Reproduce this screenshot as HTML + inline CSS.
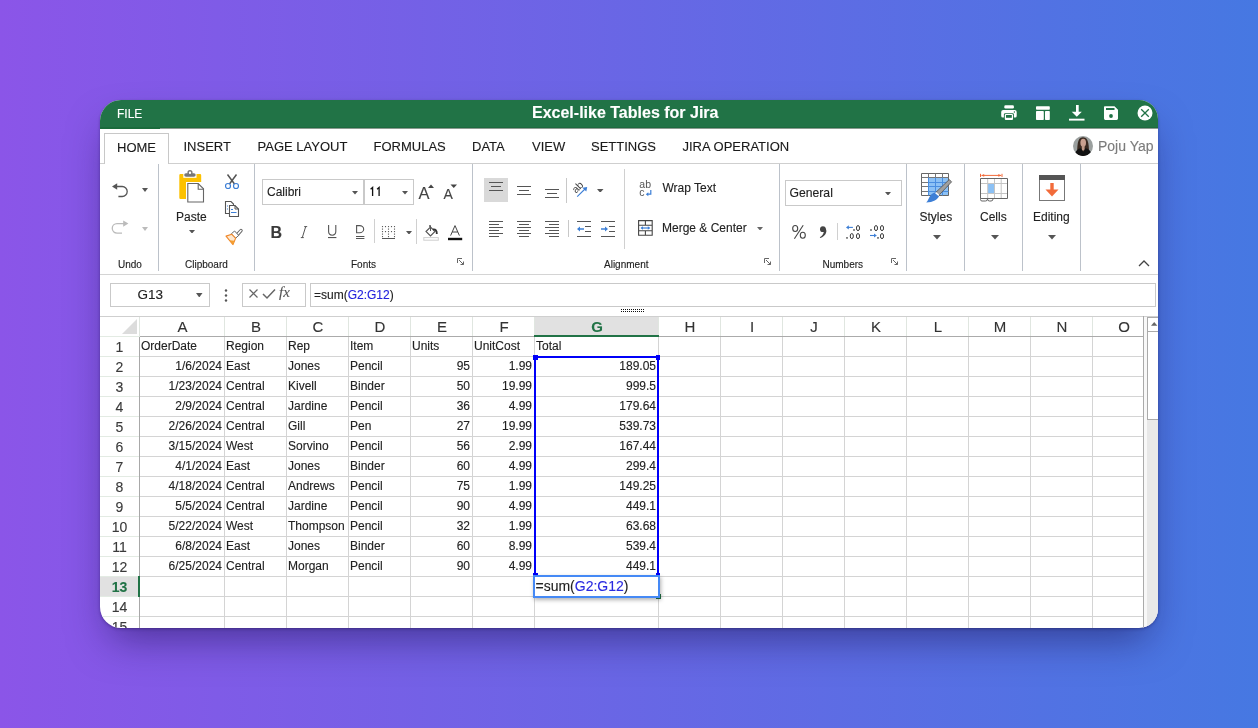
<!DOCTYPE html><html><head><meta charset='utf-8'><style>
*{box-sizing:border-box;margin:0;padding:0}
html,body{width:1258px;height:728px;overflow:hidden}
body{background:linear-gradient(90deg,#8b55e8 0%,#4678e2 100%);font-family:"Liberation Sans",sans-serif;position:relative}
#win{position:absolute;left:100px;top:100px;width:1058px;height:528px;border-radius:21px 19px 19px 21px;overflow:hidden;background:#fff;box-shadow:0 1px 3px rgba(20,10,60,.35),0 20px 40px -10px rgba(20,10,70,.5);will-change:transform}
.a{position:absolute;display:block}
.t{position:absolute;white-space:pre;line-height:1;-webkit-text-stroke:0.12px currentColor}
</style></head><body><div id='win'><div class="a" style="left:0px;top:0px;width:1058px;height:28px;background:#217346"></div>
<div class="a" style="left:0px;top:27px;width:1058px;height:1px;background:#1d6a3f"></div>
<div class="a" style="left:0px;top:28px;width:1058px;height:1px;background:#8a9a90"></div>
<div class="a" style="left:0px;top:27px;width:60px;height:2px;background:#1a6b3c"></div>
<div class="t" style="left:17px;top:8px;font-size:12px;color:#fff;">FILE</div>
<div class="t" style="left:432px;top:5px;font-size:16px;color:#fff;font-weight:bold">Excel-like Tables for Jira</div>
<svg class="a" style="left:900px;top:4px" width="18" height="18" viewBox="0 0 18 18"><rect x="4.3" y="1.2" width="9.6" height="3.3" rx="1.2" fill="#fff"/><path d="M3.2 6h11.5a2 2 0 0 1 2 2v4a1.6 1.6 0 0 1-1.6 1.6H2.8A1.6 1.6 0 0 1 1.2 12V8a2 2 0 0 1 2-2z" fill="#fff"/><rect x="3.9" y="9.3" width="10" height="7.4" rx="1.2" fill="#217346"/><rect x="4.8" y="10" width="8.2" height="6" rx="1" fill="#fff"/><rect x="6" y="11" width="5.8" height="2.8" fill="#217346"/><circle cx="14.4" cy="8" r=".7" fill="#217346"/></svg>
<svg class="a" style="left:935px;top:5px" width="16" height="16" viewBox="0 0 16 16"><rect x="1" y="1.2" width="13.8" height="3.6" rx="0.8" fill="#fff"/><rect x="1" y="6" width="7.8" height="9" rx="0.8" fill="#fff"/><rect x="10" y="6" width="4.8" height="9" rx="0.8" fill="#fff"/></svg>
<svg class="a" style="left:968px;top:4px" width="18" height="18" viewBox="0 0 18 18"><rect x="8" y="1" width="2.7" height="8.5" fill="#fff"/><path d="M3.7 7.7H13.8L8.8 12.7Z" fill="#fff"/><rect x="1" y="14.7" width="15.5" height="1.9" fill="#fff"/></svg>
<svg class="a" style="left:1003px;top:5px" width="16" height="16" viewBox="0 0 16 16"><path d="M1.8 1.2H11.5L15 4.7V13.6A1.4 1.4 0 0 1 13.6 15H2.4A1.4 1.4 0 0 1 1 13.6V2A.8.8 0 0 1 1.8 1.2Z" fill="#fff"/><rect x="3" y="3" width="8.5" height="2" fill="#217346"/><circle cx="8" cy="11" r="1.9" fill="#217346"/></svg>
<svg class="a" style="left:1037px;top:5px" width="16" height="16" viewBox="0 0 16 16"><circle cx="8" cy="8" r="7.5" fill="#fff"/><path d="M4.2 4.2L11.8 11.8M11.8 4.2L4.2 11.8" stroke="#217346" stroke-width="1.3"/></svg>
<div class="a" style="left:0px;top:63px;width:1058px;height:1px;background:#cfcfcf"></div>
<div class="a" style="left:4px;top:33px;width:65px;height:31px;border:1px solid #c8c8c8;border-bottom:none;background:#fff"></div>
<div class="t" style="left:17px;top:41px;font-size:13px;color:#1a1a1a;">HOME</div>
<div class="t" style="left:83.5px;top:40px;font-size:13px;color:#1a1a1a;">INSERT</div>
<div class="t" style="left:157.5px;top:40px;font-size:13px;color:#1a1a1a;">PAGE LAYOUT</div>
<div class="t" style="left:273.5px;top:40px;font-size:13px;color:#1a1a1a;">FORMULAS</div>
<div class="t" style="left:372px;top:40px;font-size:13px;color:#1a1a1a;">DATA</div>
<div class="t" style="left:432px;top:40px;font-size:13px;color:#1a1a1a;">VIEW</div>
<div class="t" style="left:491px;top:40px;font-size:13px;color:#1a1a1a;">SETTINGS</div>
<div class="t" style="left:582.5px;top:40px;font-size:13px;color:#1a1a1a;">JIRA OPERATION</div>
<div class="t" style="left:998px;top:39px;font-size:14px;color:#7c7c7c;">Poju Yap</div>
<div class="a" style="left:0px;top:174px;width:1058px;height:1px;background:#d4d4d4"></div>
<div class="a" style="left:58px;top:64px;width:1px;height:106.5px;background:#bcc2ca"></div>
<div class="a" style="left:154px;top:64px;width:1px;height:106.5px;background:#bcc2ca"></div>
<div class="a" style="left:372px;top:64px;width:1px;height:106.5px;background:#bcc2ca"></div>
<div class="a" style="left:679px;top:64px;width:1px;height:106.5px;background:#bcc2ca"></div>
<div class="a" style="left:806px;top:64px;width:1px;height:106.5px;background:#bcc2ca"></div>
<div class="a" style="left:864px;top:64px;width:1px;height:106.5px;background:#bcc2ca"></div>
<div class="a" style="left:922px;top:64px;width:1px;height:106.5px;background:#bcc2ca"></div>
<div class="a" style="left:980px;top:64px;width:1px;height:106.5px;background:#bcc2ca"></div>
<div class="t" style="left:18px;top:159.5px;font-size:10px;color:#222;">Undo</div>
<div class="t" style="left:85px;top:159.5px;font-size:10px;color:#222;">Clipboard</div>
<div class="t" style="left:251px;top:159.5px;font-size:10px;color:#222;">Fonts</div>
<div class="t" style="left:504px;top:159.5px;font-size:10px;color:#222;">Alignment</div>
<div class="t" style="left:722.5px;top:159.5px;font-size:10px;color:#222;">Numbers</div>
<svg class="a" style="left:356.5px;top:157.5px" width="7" height="7" viewBox="0 0 7 7"><path d="M.5 5V.5H5" fill="none" stroke="#666" stroke-width="1"/><path d="M2 2L6.5 6.5M6.5 3.5V6.5H3.5" fill="none" stroke="#666" stroke-width="1"/></svg>
<svg class="a" style="left:664px;top:157.5px" width="7" height="7" viewBox="0 0 7 7"><path d="M.5 5V.5H5" fill="none" stroke="#666" stroke-width="1"/><path d="M2 2L6.5 6.5M6.5 3.5V6.5H3.5" fill="none" stroke="#666" stroke-width="1"/></svg>
<svg class="a" style="left:790.5px;top:157.5px" width="7" height="7" viewBox="0 0 7 7"><path d="M.5 5V.5H5" fill="none" stroke="#666" stroke-width="1"/><path d="M2 2L6.5 6.5M6.5 3.5V6.5H3.5" fill="none" stroke="#666" stroke-width="1"/></svg>
<svg class="a" style="left:1038px;top:159px" width="12" height="8" viewBox="0 0 12 8"><path d="M1 7L6 2L11 7" fill="none" stroke="#444" stroke-width="1.3"/></svg>
<svg class="a" style="left:41.5px;top:87.80000000000001px" width="6" height="4" viewBox="0 0 6 4"><path d="M0 0H6L3.0 4Z" fill="#555"/></svg>
<svg class="a" style="left:41.5px;top:126.5px" width="6" height="4" viewBox="0 0 6 4"><path d="M0 0H6L3.0 4Z" fill="#bbb"/></svg>
<div class="t" style="left:76px;top:111px;font-size:12px;color:#222;">Paste</div>
<svg class="a" style="left:88.5px;top:129.8px" width="6" height="3.6" viewBox="0 0 6 3.6"><path d="M0 0H6L3.0 3.6Z" fill="#555"/></svg>
<svg class="a" style="left:124px;top:73px" width="16" height="17" viewBox="0 0 16 17"><path d="M3.5 1.5L10.5 11M12.5 1.5L5.5 11" stroke="#555" stroke-width="1.5"/><circle cx="4" cy="13" r="2.5" fill="#fff" stroke="#3d7fd6" stroke-width="1.2"/><circle cx="12" cy="13" r="2.5" fill="#fff" stroke="#3d7fd6" stroke-width="1.2"/></svg>
<div class="a" style="left:162px;top:79px;width:102px;height:26px;border:1px solid #c9c9c9;background:#fff"></div>
<div class="a" style="left:264px;top:79px;width:50px;height:26px;border:1px solid #c9c9c9;background:#fff"></div>
<div class="t" style="left:167px;top:85.5px;font-size:12px;color:#222;">Calibri</div>
<svg class="a" style="left:251.5px;top:91px" width="6" height="3.5" viewBox="0 0 6 3.5"><path d="M0 0H6L3.0 3.5Z" fill="#555"/></svg>
<svg class="a" style="left:301.5px;top:91px" width="6" height="3.5" viewBox="0 0 6 3.5"><path d="M0 0H6L3.0 3.5Z" fill="#555"/></svg>
<div class="t" style="left:318.5px;top:85px;font-size:16.5px;color:#444;">A</div>
<div class="t" style="left:343.5px;top:87px;font-size:14px;color:#444;">A</div>
<div class="t" style="left:170.5px;top:125px;font-size:16px;color:#3a3a3a;font-weight:bold">B</div>
<div class="a" style="left:274px;top:119px;width:1px;height:24px;background:#d0d0d0"></div>
<svg class="a" style="left:305.5px;top:130.5px" width="6" height="3.7" viewBox="0 0 6 3.7"><path d="M0 0H6L3.0 3.7Z" fill="#555"/></svg>
<div class="a" style="left:316px;top:119px;width:1px;height:25px;background:#d0d0d0"></div>
<div class="a" style="left:384px;top:78px;width:24px;height:24px;background:#d9d9d9"></div>
<div class="a" style="left:389px;top:82px;width:14px;height:1.3px;background:#555"></div>
<div class="a" style="left:391px;top:86px;width:10px;height:1.3px;background:#555"></div>
<div class="a" style="left:389px;top:90px;width:14px;height:1.3px;background:#555"></div>
<div class="a" style="left:417px;top:85.5px;width:14px;height:1.3px;background:#555"></div>
<div class="a" style="left:419px;top:89.5px;width:10px;height:1.3px;background:#555"></div>
<div class="a" style="left:417px;top:93.5px;width:14px;height:1.3px;background:#555"></div>
<div class="a" style="left:445px;top:88.5px;width:14px;height:1.3px;background:#555"></div>
<div class="a" style="left:447px;top:92.5px;width:10px;height:1.3px;background:#555"></div>
<div class="a" style="left:445px;top:96.5px;width:14px;height:1.3px;background:#555"></div>
<div class="a" style="left:466px;top:78px;width:1px;height:25px;background:#c8c8c8"></div>
<svg class="a" style="left:497px;top:88.69999999999999px" width="6.5" height="3.8" viewBox="0 0 6.5 3.8"><path d="M0 0H6.5L3.25 3.8Z" fill="#555"/></svg>
<div class="a" style="left:389px;top:121px;width:14px;height:1.3px;background:#555"></div>
<div class="a" style="left:389px;top:124px;width:10px;height:1.3px;background:#555"></div>
<div class="a" style="left:389px;top:127px;width:14px;height:1.3px;background:#555"></div>
<div class="a" style="left:389px;top:130px;width:10px;height:1.3px;background:#555"></div>
<div class="a" style="left:389px;top:133px;width:14px;height:1.3px;background:#555"></div>
<div class="a" style="left:389px;top:136px;width:10px;height:1.3px;background:#555"></div>
<div class="a" style="left:417px;top:121px;width:14px;height:1.3px;background:#555"></div>
<div class="a" style="left:419px;top:124px;width:10px;height:1.3px;background:#555"></div>
<div class="a" style="left:417px;top:127px;width:14px;height:1.3px;background:#555"></div>
<div class="a" style="left:419px;top:130px;width:10px;height:1.3px;background:#555"></div>
<div class="a" style="left:417px;top:133px;width:14px;height:1.3px;background:#555"></div>
<div class="a" style="left:419px;top:136px;width:10px;height:1.3px;background:#555"></div>
<div class="a" style="left:445px;top:121px;width:14px;height:1.3px;background:#555"></div>
<div class="a" style="left:449px;top:124px;width:10px;height:1.3px;background:#555"></div>
<div class="a" style="left:445px;top:127px;width:14px;height:1.3px;background:#555"></div>
<div class="a" style="left:449px;top:130px;width:10px;height:1.3px;background:#555"></div>
<div class="a" style="left:445px;top:133px;width:14px;height:1.3px;background:#555"></div>
<div class="a" style="left:449px;top:136px;width:10px;height:1.3px;background:#555"></div>
<div class="a" style="left:468px;top:120px;width:1px;height:17px;background:#c8c8c8"></div>
<div class="a" style="left:477px;top:121px;width:14px;height:1.3px;background:#555"></div>
<div class="a" style="left:485px;top:126px;width:6px;height:1.3px;background:#555"></div>
<div class="a" style="left:485px;top:131px;width:6px;height:1.3px;background:#555"></div>
<div class="a" style="left:477px;top:136px;width:14px;height:1.3px;background:#555"></div>
<svg class="a" style="left:477px;top:126px" width="8" height="6" viewBox="0 0 8 6"><path d="M0 3L3 0.5V5.5Z" fill="#3d7fd6"/><path d="M2 3H7" stroke="#3d7fd6" stroke-width="1.4"/></svg>
<div class="a" style="left:501px;top:121px;width:14px;height:1.3px;background:#555"></div>
<div class="a" style="left:509px;top:126px;width:6px;height:1.3px;background:#555"></div>
<div class="a" style="left:509px;top:131px;width:6px;height:1.3px;background:#555"></div>
<div class="a" style="left:501px;top:136px;width:14px;height:1.3px;background:#555"></div>
<svg class="a" style="left:501px;top:126px" width="8" height="6" viewBox="0 0 8 6"><path d="M7 3L4 0.5V5.5Z" fill="#3d7fd6"/><path d="M0 3H5" stroke="#3d7fd6" stroke-width="1.4"/></svg>
<div class="a" style="left:524px;top:69px;width:1px;height:80px;background:#d0d0d0"></div>
<div class="t" style="left:562.5px;top:82px;font-size:12px;color:#222;">Wrap Text</div>
<div class="t" style="left:562px;top:122px;font-size:12px;color:#222;">Merge &amp; Center</div>
<svg class="a" style="left:656.5px;top:126.5px" width="6" height="3.5" viewBox="0 0 6 3.5"><path d="M0 0H6L3.0 3.5Z" fill="#666"/></svg>
<div class="a" style="left:685px;top:80px;width:117px;height:26px;border:1px solid #c9c9c9;background:#fff"></div>
<div class="t" style="left:689.5px;top:86.5px;font-size:12.2px;color:#222;">General</div>
<svg class="a" style="left:784.5px;top:91.5px" width="6" height="3.5" viewBox="0 0 6 3.5"><path d="M0 0H6L3.0 3.5Z" fill="#555"/></svg>
<div class="a" style="left:737px;top:123px;width:1px;height:17px;background:#d0d0d0"></div>
<div class="t" style="left:819.5px;top:111px;font-size:12px;color:#222;">Styles</div>
<svg class="a" style="left:832.5px;top:135.2px" width="8" height="4.4" viewBox="0 0 8 4.4"><path d="M0 0H8L4.0 4.4Z" fill="#555"/></svg>
<div class="t" style="left:880px;top:111px;font-size:12px;color:#222;">Cells</div>
<svg class="a" style="left:890.5px;top:135.2px" width="8" height="4.4" viewBox="0 0 8 4.4"><path d="M0 0H8L4.0 4.4Z" fill="#555"/></svg>
<svg class="a" style="left:938px;top:74px" width="28" height="28" viewBox="0 0 28 28"><rect x="1.5" y="1.5" width="25" height="25" fill="#fff" stroke="#777" stroke-width="1"/><rect x="1" y="1" width="26" height="5" fill="#555"/><rect x="12.3" y="9" width="3.4" height="8" fill="#f26b3a"/><path d="M7.5 15.5H20.5L14 22.5Z" fill="#f26b3a"/></svg>
<div class="t" style="left:933px;top:111px;font-size:12px;color:#222;">Editing</div>
<svg class="a" style="left:948px;top:135.2px" width="8" height="4.4" viewBox="0 0 8 4.4"><path d="M0 0H8L4.0 4.4Z" fill="#555"/></svg>
<div class="a" style="left:10px;top:183px;width:100px;height:24px;border:1px solid #c9c9c9;background:#fff"></div>
<div class="t" style="left:37.5px;top:188px;font-size:13.5px;color:#222;">G13</div>
<svg class="a" style="left:96px;top:192.8px" width="6.5" height="4.5" viewBox="0 0 6.5 4.5"><path d="M0 0H6.5L3.25 4.5Z" fill="#555"/></svg>
<svg class="a" style="left:122px;top:188px" width="8" height="16" viewBox="0 0 8 16"><circle cx="4" cy="2.5" r="1.2" fill="#555"/><circle cx="4" cy="7.5" r="1.2" fill="#555"/><circle cx="4" cy="12.5" r="1.2" fill="#555"/></svg>
<div class="a" style="left:142px;top:183px;width:64px;height:24px;border:1px solid #c9c9c9;background:#fff"></div>
<svg class="a" style="left:148px;top:188px" width="12" height="12" viewBox="0 0 12 12"><path d="M1.5 1.5L9.5 9.5M9.5 1.5L1.5 9.5" stroke="#666" stroke-width="1.2"/></svg>
<svg class="a" style="left:162px;top:188px" width="14" height="12" viewBox="0 0 14 12"><path d="M1 6L5 10L13 1.5" fill="none" stroke="#666" stroke-width="1.5"/></svg>
<div class="t" style="left:179px;top:185px;font-size:15px;color:#555;font-family:'Liberation Serif';font-style:italic">fx</div>
<div class="a" style="left:210px;top:183px;width:846px;height:24px;border:1px solid #c9c9c9;background:#fff"></div>
<div class="t" style="left:214px;top:188.5px;font-size:12px;color:#222;">=sum(<span style="color:#2222dd">G2:G12</span>)</div>
<svg class="a" style="left:521px;top:209px" width="25" height="4" viewBox="0 0 25 4"><rect x="0" y="0" width="1" height="1" fill="#111"/><rect x="0" y="2" width="1" height="1" fill="#111"/><rect x="2" y="0" width="1" height="1" fill="#111"/><rect x="2" y="2" width="1" height="1" fill="#111"/><rect x="4" y="0" width="1" height="1" fill="#111"/><rect x="4" y="2" width="1" height="1" fill="#111"/><rect x="6" y="0" width="1" height="1" fill="#111"/><rect x="6" y="2" width="1" height="1" fill="#111"/><rect x="8" y="0" width="1" height="1" fill="#111"/><rect x="8" y="2" width="1" height="1" fill="#111"/><rect x="10" y="0" width="1" height="1" fill="#111"/><rect x="10" y="2" width="1" height="1" fill="#111"/><rect x="12" y="0" width="1" height="1" fill="#111"/><rect x="12" y="2" width="1" height="1" fill="#111"/><rect x="14" y="0" width="1" height="1" fill="#111"/><rect x="14" y="2" width="1" height="1" fill="#111"/><rect x="16" y="0" width="1" height="1" fill="#111"/><rect x="16" y="2" width="1" height="1" fill="#111"/><rect x="18" y="0" width="1" height="1" fill="#111"/><rect x="18" y="2" width="1" height="1" fill="#111"/><rect x="20" y="0" width="1" height="1" fill="#111"/><rect x="20" y="2" width="1" height="1" fill="#111"/><rect x="22" y="0" width="1" height="1" fill="#111"/><rect x="22" y="2" width="1" height="1" fill="#111"/></svg>
<div class="a" style="left:0px;top:216px;width:1043px;height:20px;background:#fff"></div>
<div class="a" style="left:434px;top:217px;width:125px;height:19px;background:#e1e1e1"></div>
<div class="a" style="left:434px;top:234.5px;width:125px;height:2px;background:#217346"></div>
<svg class="a" style="left:22px;top:219px" width="15" height="15" viewBox="0 0 15 15"><path d="M15 0V15H0Z" fill="#dcdcdc"/></svg>
<div class="a" style="left:0px;top:216px;width:1043px;height:1px;background:#cfcfcf"></div>
<div class="a" style="left:0px;top:236px;width:40px;height:1px;background:#e3ebe3"></div>
<div class="a" style="left:40px;top:236px;width:1003px;height:1px;background:#ababab"></div>
<div class="a" style="left:124px;top:217px;width:1px;height:19px;background:#e0e6e0"></div>
<div class="a" style="left:186px;top:217px;width:1px;height:19px;background:#e0e6e0"></div>
<div class="a" style="left:248px;top:217px;width:1px;height:19px;background:#e0e6e0"></div>
<div class="a" style="left:310px;top:217px;width:1px;height:19px;background:#e0e6e0"></div>
<div class="a" style="left:372px;top:217px;width:1px;height:19px;background:#e0e6e0"></div>
<div class="a" style="left:434px;top:217px;width:1px;height:19px;background:#e0e6e0"></div>
<div class="a" style="left:558px;top:217px;width:1px;height:19px;background:#e0e6e0"></div>
<div class="a" style="left:620px;top:217px;width:1px;height:19px;background:#e0e6e0"></div>
<div class="a" style="left:682px;top:217px;width:1px;height:19px;background:#e0e6e0"></div>
<div class="a" style="left:744px;top:217px;width:1px;height:19px;background:#e0e6e0"></div>
<div class="a" style="left:806px;top:217px;width:1px;height:19px;background:#e0e6e0"></div>
<div class="a" style="left:868px;top:217px;width:1px;height:19px;background:#e0e6e0"></div>
<div class="a" style="left:930px;top:217px;width:1px;height:19px;background:#e0e6e0"></div>
<div class="a" style="left:992px;top:217px;width:1px;height:19px;background:#e0e6e0"></div>
<div class="a" style="left:39px;top:217px;width:1px;height:19px;background:#e0e6e0"></div>
<div class="a" style="left:40px;top:256px;width:1003px;height:1px;background:#d4d4d4"></div>
<div class="a" style="left:0px;top:256px;width:39px;height:1px;background:#e3ebe3"></div>
<div class="a" style="left:40px;top:276px;width:1003px;height:1px;background:#d4d4d4"></div>
<div class="a" style="left:0px;top:276px;width:39px;height:1px;background:#e3ebe3"></div>
<div class="a" style="left:40px;top:296px;width:1003px;height:1px;background:#d4d4d4"></div>
<div class="a" style="left:0px;top:296px;width:39px;height:1px;background:#e3ebe3"></div>
<div class="a" style="left:40px;top:316px;width:1003px;height:1px;background:#d4d4d4"></div>
<div class="a" style="left:0px;top:316px;width:39px;height:1px;background:#e3ebe3"></div>
<div class="a" style="left:40px;top:336px;width:1003px;height:1px;background:#d4d4d4"></div>
<div class="a" style="left:0px;top:336px;width:39px;height:1px;background:#e3ebe3"></div>
<div class="a" style="left:40px;top:356px;width:1003px;height:1px;background:#d4d4d4"></div>
<div class="a" style="left:0px;top:356px;width:39px;height:1px;background:#e3ebe3"></div>
<div class="a" style="left:40px;top:376px;width:1003px;height:1px;background:#d4d4d4"></div>
<div class="a" style="left:0px;top:376px;width:39px;height:1px;background:#e3ebe3"></div>
<div class="a" style="left:40px;top:396px;width:1003px;height:1px;background:#d4d4d4"></div>
<div class="a" style="left:0px;top:396px;width:39px;height:1px;background:#e3ebe3"></div>
<div class="a" style="left:40px;top:416px;width:1003px;height:1px;background:#d4d4d4"></div>
<div class="a" style="left:0px;top:416px;width:39px;height:1px;background:#e3ebe3"></div>
<div class="a" style="left:40px;top:436px;width:1003px;height:1px;background:#d4d4d4"></div>
<div class="a" style="left:0px;top:436px;width:39px;height:1px;background:#e3ebe3"></div>
<div class="a" style="left:40px;top:456px;width:1003px;height:1px;background:#d4d4d4"></div>
<div class="a" style="left:0px;top:456px;width:39px;height:1px;background:#e3ebe3"></div>
<div class="a" style="left:40px;top:476px;width:1003px;height:1px;background:#d4d4d4"></div>
<div class="a" style="left:0px;top:476px;width:39px;height:1px;background:#e3ebe3"></div>
<div class="a" style="left:40px;top:496px;width:1003px;height:1px;background:#d4d4d4"></div>
<div class="a" style="left:0px;top:496px;width:39px;height:1px;background:#e3ebe3"></div>
<div class="a" style="left:40px;top:516px;width:1003px;height:1px;background:#d4d4d4"></div>
<div class="a" style="left:0px;top:516px;width:39px;height:1px;background:#e3ebe3"></div>
<div class="a" style="left:40px;top:536px;width:1003px;height:1px;background:#d4d4d4"></div>
<div class="a" style="left:0px;top:536px;width:39px;height:1px;background:#e3ebe3"></div>
<div class="a" style="left:124px;top:237px;width:1px;height:300px;background:#d4d4d4"></div>
<div class="a" style="left:186px;top:237px;width:1px;height:300px;background:#d4d4d4"></div>
<div class="a" style="left:248px;top:237px;width:1px;height:300px;background:#d4d4d4"></div>
<div class="a" style="left:310px;top:237px;width:1px;height:300px;background:#d4d4d4"></div>
<div class="a" style="left:372px;top:237px;width:1px;height:300px;background:#d4d4d4"></div>
<div class="a" style="left:434px;top:237px;width:1px;height:300px;background:#d4d4d4"></div>
<div class="a" style="left:558px;top:237px;width:1px;height:300px;background:#d4d4d4"></div>
<div class="a" style="left:620px;top:237px;width:1px;height:300px;background:#d4d4d4"></div>
<div class="a" style="left:682px;top:237px;width:1px;height:300px;background:#d4d4d4"></div>
<div class="a" style="left:744px;top:237px;width:1px;height:300px;background:#d4d4d4"></div>
<div class="a" style="left:806px;top:237px;width:1px;height:300px;background:#d4d4d4"></div>
<div class="a" style="left:868px;top:237px;width:1px;height:300px;background:#d4d4d4"></div>
<div class="a" style="left:930px;top:237px;width:1px;height:300px;background:#d4d4d4"></div>
<div class="a" style="left:992px;top:237px;width:1px;height:300px;background:#d4d4d4"></div>
<div class="a" style="left:1043px;top:237px;width:1px;height:300px;background:#d4d4d4"></div>
<div class="a" style="left:39px;top:237px;width:1px;height:300px;background:#a8a8a8"></div>
<div class="a" style="left:1043px;top:216px;width:1px;height:320px;background:#bdbdbd"></div>
<div class="a" style="left:434px;top:235px;width:125px;height:2px;background:#217346"></div>
<div class="a" style="left:0px;top:477px;width:39px;height:19px;background:#e1e1e1"></div>
<div class="a" style="left:38px;top:476px;width:2px;height:21px;background:#217346"></div>
<div class="t" style="left:40px;top:219px;width:85px;text-align:center;font-size:15px;color:#333">A</div>
<div class="t" style="left:125px;top:219px;width:62px;text-align:center;font-size:15px;color:#333">B</div>
<div class="t" style="left:187px;top:219px;width:62px;text-align:center;font-size:15px;color:#333">C</div>
<div class="t" style="left:249px;top:219px;width:62px;text-align:center;font-size:15px;color:#333">D</div>
<div class="t" style="left:311px;top:219px;width:62px;text-align:center;font-size:15px;color:#333">E</div>
<div class="t" style="left:373px;top:219px;width:62px;text-align:center;font-size:15px;color:#333">F</div>
<div class="t" style="left:435px;top:219px;width:124px;text-align:center;font-size:15px;font-weight:bold;color:#217346">G</div>
<div class="t" style="left:559px;top:219px;width:62px;text-align:center;font-size:15px;color:#333">H</div>
<div class="t" style="left:621px;top:219px;width:62px;text-align:center;font-size:15px;color:#333">I</div>
<div class="t" style="left:683px;top:219px;width:62px;text-align:center;font-size:15px;color:#333">J</div>
<div class="t" style="left:745px;top:219px;width:62px;text-align:center;font-size:15px;color:#333">K</div>
<div class="t" style="left:807px;top:219px;width:62px;text-align:center;font-size:15px;color:#333">L</div>
<div class="t" style="left:869px;top:219px;width:62px;text-align:center;font-size:15px;color:#333">M</div>
<div class="t" style="left:931px;top:219px;width:62px;text-align:center;font-size:15px;color:#333">N</div>
<div class="t" style="left:993px;top:219px;width:62px;text-align:center;font-size:15px;color:#333">O</div>
<div class="t" style="left:0px;top:239.5px;width:39px;text-align:center;font-size:14px;color:#3a3a3a">1</div>
<div class="t" style="left:0px;top:259.5px;width:39px;text-align:center;font-size:14px;color:#3a3a3a">2</div>
<div class="t" style="left:0px;top:279.5px;width:39px;text-align:center;font-size:14px;color:#3a3a3a">3</div>
<div class="t" style="left:0px;top:299.5px;width:39px;text-align:center;font-size:14px;color:#3a3a3a">4</div>
<div class="t" style="left:0px;top:319.5px;width:39px;text-align:center;font-size:14px;color:#3a3a3a">5</div>
<div class="t" style="left:0px;top:339.5px;width:39px;text-align:center;font-size:14px;color:#3a3a3a">6</div>
<div class="t" style="left:0px;top:359.5px;width:39px;text-align:center;font-size:14px;color:#3a3a3a">7</div>
<div class="t" style="left:0px;top:379.5px;width:39px;text-align:center;font-size:14px;color:#3a3a3a">8</div>
<div class="t" style="left:0px;top:399.5px;width:39px;text-align:center;font-size:14px;color:#3a3a3a">9</div>
<div class="t" style="left:0px;top:419.5px;width:39px;text-align:center;font-size:14px;color:#3a3a3a">10</div>
<div class="t" style="left:0px;top:439.5px;width:39px;text-align:center;font-size:14px;color:#3a3a3a">11</div>
<div class="t" style="left:0px;top:459.5px;width:39px;text-align:center;font-size:14px;color:#3a3a3a">12</div>
<div class="t" style="left:0px;top:479.5px;width:39px;text-align:center;font-size:14px;font-weight:bold;color:#217346">13</div>
<div class="t" style="left:0px;top:499.5px;width:39px;text-align:center;font-size:14px;color:#3a3a3a">14</div>
<div class="t" style="left:0px;top:519.5px;width:39px;text-align:center;font-size:14px;color:#3a3a3a">15</div>
<div class="t" style="left:41px;top:240px;font-size:12px;color:#222">OrderDate</div>
<div class="t" style="left:126px;top:240px;font-size:12px;color:#222">Region</div>
<div class="t" style="left:188px;top:240px;font-size:12px;color:#222">Rep</div>
<div class="t" style="left:250px;top:240px;font-size:12px;color:#222">Item</div>
<div class="t" style="left:312px;top:240px;font-size:12px;color:#222">Units</div>
<div class="t" style="left:374px;top:240px;font-size:12px;color:#222">UnitCost</div>
<div class="t" style="left:436px;top:240px;font-size:12px;color:#222">Total</div>
<div class="t" style="left:40px;top:260px;width:82px;text-align:right;font-size:12px;color:#222">1/6/2024</div>
<div class="t" style="left:126px;top:260px;font-size:12px;color:#222">East</div>
<div class="t" style="left:188px;top:260px;font-size:12px;color:#222">Jones</div>
<div class="t" style="left:250px;top:260px;font-size:12px;color:#222">Pencil</div>
<div class="t" style="left:311px;top:260px;width:59px;text-align:right;font-size:12px;color:#222">95</div>
<div class="t" style="left:373px;top:260px;width:59px;text-align:right;font-size:12px;color:#222">1.99</div>
<div class="t" style="left:435px;top:260px;width:121px;text-align:right;font-size:12px;color:#222">189.05</div>
<div class="t" style="left:40px;top:280px;width:82px;text-align:right;font-size:12px;color:#222">1/23/2024</div>
<div class="t" style="left:126px;top:280px;font-size:12px;color:#222">Central</div>
<div class="t" style="left:188px;top:280px;font-size:12px;color:#222">Kivell</div>
<div class="t" style="left:250px;top:280px;font-size:12px;color:#222">Binder</div>
<div class="t" style="left:311px;top:280px;width:59px;text-align:right;font-size:12px;color:#222">50</div>
<div class="t" style="left:373px;top:280px;width:59px;text-align:right;font-size:12px;color:#222">19.99</div>
<div class="t" style="left:435px;top:280px;width:121px;text-align:right;font-size:12px;color:#222">999.5</div>
<div class="t" style="left:40px;top:300px;width:82px;text-align:right;font-size:12px;color:#222">2/9/2024</div>
<div class="t" style="left:126px;top:300px;font-size:12px;color:#222">Central</div>
<div class="t" style="left:188px;top:300px;font-size:12px;color:#222">Jardine</div>
<div class="t" style="left:250px;top:300px;font-size:12px;color:#222">Pencil</div>
<div class="t" style="left:311px;top:300px;width:59px;text-align:right;font-size:12px;color:#222">36</div>
<div class="t" style="left:373px;top:300px;width:59px;text-align:right;font-size:12px;color:#222">4.99</div>
<div class="t" style="left:435px;top:300px;width:121px;text-align:right;font-size:12px;color:#222">179.64</div>
<div class="t" style="left:40px;top:320px;width:82px;text-align:right;font-size:12px;color:#222">2/26/2024</div>
<div class="t" style="left:126px;top:320px;font-size:12px;color:#222">Central</div>
<div class="t" style="left:188px;top:320px;font-size:12px;color:#222">Gill</div>
<div class="t" style="left:250px;top:320px;font-size:12px;color:#222">Pen</div>
<div class="t" style="left:311px;top:320px;width:59px;text-align:right;font-size:12px;color:#222">27</div>
<div class="t" style="left:373px;top:320px;width:59px;text-align:right;font-size:12px;color:#222">19.99</div>
<div class="t" style="left:435px;top:320px;width:121px;text-align:right;font-size:12px;color:#222">539.73</div>
<div class="t" style="left:40px;top:340px;width:82px;text-align:right;font-size:12px;color:#222">3/15/2024</div>
<div class="t" style="left:126px;top:340px;font-size:12px;color:#222">West</div>
<div class="t" style="left:188px;top:340px;font-size:12px;color:#222">Sorvino</div>
<div class="t" style="left:250px;top:340px;font-size:12px;color:#222">Pencil</div>
<div class="t" style="left:311px;top:340px;width:59px;text-align:right;font-size:12px;color:#222">56</div>
<div class="t" style="left:373px;top:340px;width:59px;text-align:right;font-size:12px;color:#222">2.99</div>
<div class="t" style="left:435px;top:340px;width:121px;text-align:right;font-size:12px;color:#222">167.44</div>
<div class="t" style="left:40px;top:360px;width:82px;text-align:right;font-size:12px;color:#222">4/1/2024</div>
<div class="t" style="left:126px;top:360px;font-size:12px;color:#222">East</div>
<div class="t" style="left:188px;top:360px;font-size:12px;color:#222">Jones</div>
<div class="t" style="left:250px;top:360px;font-size:12px;color:#222">Binder</div>
<div class="t" style="left:311px;top:360px;width:59px;text-align:right;font-size:12px;color:#222">60</div>
<div class="t" style="left:373px;top:360px;width:59px;text-align:right;font-size:12px;color:#222">4.99</div>
<div class="t" style="left:435px;top:360px;width:121px;text-align:right;font-size:12px;color:#222">299.4</div>
<div class="t" style="left:40px;top:380px;width:82px;text-align:right;font-size:12px;color:#222">4/18/2024</div>
<div class="t" style="left:126px;top:380px;font-size:12px;color:#222">Central</div>
<div class="t" style="left:188px;top:380px;font-size:12px;color:#222">Andrews</div>
<div class="t" style="left:250px;top:380px;font-size:12px;color:#222">Pencil</div>
<div class="t" style="left:311px;top:380px;width:59px;text-align:right;font-size:12px;color:#222">75</div>
<div class="t" style="left:373px;top:380px;width:59px;text-align:right;font-size:12px;color:#222">1.99</div>
<div class="t" style="left:435px;top:380px;width:121px;text-align:right;font-size:12px;color:#222">149.25</div>
<div class="t" style="left:40px;top:400px;width:82px;text-align:right;font-size:12px;color:#222">5/5/2024</div>
<div class="t" style="left:126px;top:400px;font-size:12px;color:#222">Central</div>
<div class="t" style="left:188px;top:400px;font-size:12px;color:#222">Jardine</div>
<div class="t" style="left:250px;top:400px;font-size:12px;color:#222">Pencil</div>
<div class="t" style="left:311px;top:400px;width:59px;text-align:right;font-size:12px;color:#222">90</div>
<div class="t" style="left:373px;top:400px;width:59px;text-align:right;font-size:12px;color:#222">4.99</div>
<div class="t" style="left:435px;top:400px;width:121px;text-align:right;font-size:12px;color:#222">449.1</div>
<div class="t" style="left:40px;top:420px;width:82px;text-align:right;font-size:12px;color:#222">5/22/2024</div>
<div class="t" style="left:126px;top:420px;font-size:12px;color:#222">West</div>
<div class="t" style="left:188px;top:420px;font-size:12px;color:#222">Thompson</div>
<div class="t" style="left:250px;top:420px;font-size:12px;color:#222">Pencil</div>
<div class="t" style="left:311px;top:420px;width:59px;text-align:right;font-size:12px;color:#222">32</div>
<div class="t" style="left:373px;top:420px;width:59px;text-align:right;font-size:12px;color:#222">1.99</div>
<div class="t" style="left:435px;top:420px;width:121px;text-align:right;font-size:12px;color:#222">63.68</div>
<div class="t" style="left:40px;top:440px;width:82px;text-align:right;font-size:12px;color:#222">6/8/2024</div>
<div class="t" style="left:126px;top:440px;font-size:12px;color:#222">East</div>
<div class="t" style="left:188px;top:440px;font-size:12px;color:#222">Jones</div>
<div class="t" style="left:250px;top:440px;font-size:12px;color:#222">Binder</div>
<div class="t" style="left:311px;top:440px;width:59px;text-align:right;font-size:12px;color:#222">60</div>
<div class="t" style="left:373px;top:440px;width:59px;text-align:right;font-size:12px;color:#222">8.99</div>
<div class="t" style="left:435px;top:440px;width:121px;text-align:right;font-size:12px;color:#222">539.4</div>
<div class="t" style="left:40px;top:460px;width:82px;text-align:right;font-size:12px;color:#222">6/25/2024</div>
<div class="t" style="left:126px;top:460px;font-size:12px;color:#222">Central</div>
<div class="t" style="left:188px;top:460px;font-size:12px;color:#222">Morgan</div>
<div class="t" style="left:250px;top:460px;font-size:12px;color:#222">Pencil</div>
<div class="t" style="left:311px;top:460px;width:59px;text-align:right;font-size:12px;color:#222">90</div>
<div class="t" style="left:373px;top:460px;width:59px;text-align:right;font-size:12px;color:#222">4.99</div>
<div class="t" style="left:435px;top:460px;width:121px;text-align:right;font-size:12px;color:#222">449.1</div>
<div class="a" style="left:434px;top:256px;width:2px;height:220px;background:#0000f8"></div>
<div class="a" style="left:557px;top:256px;width:2px;height:220px;background:#0000f8"></div>
<div class="a" style="left:434px;top:256px;width:125px;height:2px;background:#0000f8"></div>
<div class="a" style="left:433px;top:255px;width:4.5px;height:4.5px;background:#0000f8"></div>
<div class="a" style="left:555.5px;top:255px;width:4.5px;height:4.5px;background:#0000f8"></div>
<div class="a" style="left:433px;top:472.5px;width:4.5px;height:4.5px;background:#0000f8"></div>
<div class="a" style="left:555.5px;top:472.5px;width:4.5px;height:4.5px;background:#0000f8"></div>
<div class="a" style="left:555.5px;top:493.5px;width:5px;height:5px;background:#217346"></div>
<div class="a" style="left:433px;top:475px;width:127px;height:23px;border:2px solid #4589f5;background:#fff;box-shadow:1px 2px 4px rgba(0,0,0,.3)"></div>
<div class="t" style="left:435.5px;top:479px;font-size:14px;color:#222;">=sum(<span style="color:#2a2ae0">G2:G12</span>)</div>
<div class="a" style="left:1043px;top:216px;width:1px;height:320px;background:#aaaaaa"></div>
<div class="a" style="left:1044px;top:216px;width:3px;height:320px;background:#f8f8f8"></div>
<div class="a" style="left:1044px;top:216px;width:14px;height:1px;background:#d0d0d0"></div>
<div class="a" style="left:1047px;top:217px;width:11px;height:320px;background:#e8e8e8"></div>
<div class="a" style="left:1047px;top:217px;width:12px;height:15px;background:#fff;border:1px solid #aaa"></div>
<div class="a" style="left:1047px;top:231px;width:12px;height:89px;background:#fff;border:1px solid #aaa"></div>
<svg class="a" style="left:0;top:0" width="1058" height="528" viewBox="100 100 1058 528"><defs><clipPath id="av"><circle cx="1083" cy="146" r="10"/></clipPath></defs><g clip-path="url(#av)"><rect x="1073" y="136" width="20" height="20" fill="#9ba09f"/><path d="M1077 157C1077.5 147 1076.5 137.3 1083 137.2C1089.5 137.3 1088.8 147 1089.2 157Z" fill="#3a2a21"/><ellipse cx="1083.2" cy="142.8" rx="2.8" ry="4" fill="#caa190"/><rect x="1081.8" y="145.5" width="2.8" height="5" fill="#c09a88"/><path d="M1074 157C1075 151 1078 148.5 1081 148.3L1083.2 152L1085.4 148.3C1088.4 148.5 1091.4 151 1092.4 157Z" fill="#121212"/></g><path d="M116 186.5H122.2A5 5 0 0 1 122.2 196.5H118.4" fill="none" stroke="#555" stroke-width="1.3"/><path d="M112 186.5L117.2 183.3V189.7Z" fill="#555"/><path d="M124 223.6H117A4.75 4.75 0 0 0 117 233.1H122" fill="none" stroke="#bbb" stroke-width="1.3"/><path d="M128.4 223.6L123.2 220.4V226.8Z" fill="#bbb"/><path d="M180.5 174H200A1.2 1.2 0 0 1 201.2 175.2V182H186V199H180.5A1.2 1.2 0 0 1 179.3 197.8V175.2A1.2 1.2 0 0 1 180.5 174Z" fill="#fcc100"/><rect x="183.3" y="171.5" width="13.2" height="6.3" fill="#fff"/><rect x="184.2" y="173.2" width="11.5" height="3.6" rx="1.8" fill="#777"/><circle cx="190" cy="172.7" r="1.9" fill="#fff" stroke="#777" stroke-width="1.4"/><path d="M187.8 183.5H198.2L203.5 188.8V202H187.8Z" fill="#fff" stroke="#fff" stroke-width="3"/><path d="M187.8 183.5H198.2L203.5 188.8V202H187.8Z" fill="#fff" stroke="#666" stroke-width="1.1"/><path d="M198.2 183.5V189.3H203.5" fill="none" stroke="#666" stroke-width="1.1"/><path d="M225.5 201.5H231L233.5 204V213.5H225.5Z" fill="#fff" stroke="#555" stroke-width="1.1"/><path d="M229.5 205.5H235L238.5 209V216.5H229.5Z" fill="#fff" stroke="#555" stroke-width="1.1"/><path d="M235 205.5V209H238.5" fill="none" stroke="#555" stroke-width="1"/><path d="M227.5 205.5V206.5M227.5 208.5V209.5" stroke="#3d7fd6" stroke-width="1"/><path d="M231 209.5H233M231 212.5H236.5" stroke="#3d7fd6" stroke-width="1.1"/><path d="M237 235L241 230.6" stroke="#666" stroke-width="3.4" stroke-linecap="round"/><path d="M237 235L241 230.6" stroke="#fff" stroke-width="1.5" stroke-linecap="round"/><path d="M231.3 233.8L234.6 231L238.6 235.3L235.5 238.4Z" fill="#fff" stroke="#666" stroke-width="1"/><path d="M231.8 234.3L235.6 238.2L233 244.6L226 236.1Z" fill="#fde8d0" stroke="#f0882a" stroke-width="1.1" stroke-linejoin="round"/><path d="M229.4 240.2L234.6 240.8L233 244.6Z" fill="#f5a030"/><path d="M370.6 189.2L372.6 187.4V196M377.1 189.2L379.1 187.4V196" fill="none" stroke="#111" stroke-width="1.3"/><path d="M428 188H434L431 184.5Z" fill="#444"/><path d="M450.5 184.5H457L453.75 188Z" fill="#444"/><path d="M304.2 226.6H307.2M300.8 237.6H303.8M305.7 226.6L302.3 237.6" stroke="#555" stroke-width="1" fill="none"/><path d="M328.6 225V231.6A3.6 3.6 0 0 0 335.8 231.6V225" stroke="#555" stroke-width="1.1" fill="none"/><rect x="328" y="237" width="8.4" height="1.1" fill="#555"/><path d="M356.6 225.6H359.6A4.1 3.55 0 0 1 359.6 232.7H356.6Z" stroke="#555" stroke-width="1.1" fill="none"/><rect x="356" y="236" width="8.4" height="1" fill="#555"/><rect x="356" y="238" width="8.4" height="1" fill="#555"/><rect x="381.95" y="226.04999999999998" width="1.1" height="1.1" fill="#555"/><rect x="384.95" y="226.04999999999998" width="1.1" height="1.1" fill="#555"/><rect x="387.95" y="226.04999999999998" width="1.1" height="1.1" fill="#555"/><rect x="390.95" y="226.04999999999998" width="1.1" height="1.1" fill="#555"/><rect x="393.95" y="226.04999999999998" width="1.1" height="1.1" fill="#555"/><rect x="381.95" y="228.54999999999998" width="1.1" height="1.1" fill="#555"/><rect x="387.95" y="228.54999999999998" width="1.1" height="1.1" fill="#555"/><rect x="393.95" y="228.54999999999998" width="1.1" height="1.1" fill="#555"/><rect x="381.95" y="231.04999999999998" width="1.1" height="1.1" fill="#555"/><rect x="384.95" y="231.04999999999998" width="1.1" height="1.1" fill="#555"/><rect x="387.95" y="231.04999999999998" width="1.1" height="1.1" fill="#555"/><rect x="390.95" y="231.04999999999998" width="1.1" height="1.1" fill="#555"/><rect x="393.95" y="231.04999999999998" width="1.1" height="1.1" fill="#555"/><rect x="381.95" y="233.54999999999998" width="1.1" height="1.1" fill="#555"/><rect x="387.95" y="233.54999999999998" width="1.1" height="1.1" fill="#555"/><rect x="393.95" y="233.54999999999998" width="1.1" height="1.1" fill="#555"/><rect x="381.95" y="236.04999999999998" width="1.1" height="1.1" fill="#555"/><rect x="387.95" y="236.04999999999998" width="1.1" height="1.1" fill="#555"/><rect x="393.95" y="236.04999999999998" width="1.1" height="1.1" fill="#555"/><rect x="382" y="238" width="13" height="1" fill="#555"/><path d="M426 231.5L430.5 227L435 231.5L430.5 236Z" fill="#fff" stroke="#555" stroke-width="1.1"/><path d="M430.5 226V231" stroke="#555" stroke-width="1"/><circle cx="430" cy="226" r="1" fill="#555"/><path d="M433 229.5Q437 229 436.8 234" fill="none" stroke="#333" stroke-width="1.8"/><rect x="423.8" y="237.6" width="14.5" height="2.6" fill="#fff" stroke="#cfcfcf" stroke-width="1"/><path d="M450.6 235.6L455 225.6L459.4 235.6M452.2 232H457.8" stroke="#444" stroke-width="1" fill="none"/><rect x="448" y="237.8" width="14.2" height="2.4" fill="#111"/><text x="0" y="0" transform="translate(575.9 193.8) rotate(-45)" font-family="Liberation Sans" font-size="10.5" fill="#444">ab</text><path d="M577.2 196.6L585.5 188.5" stroke="#3d7fd6" stroke-width="1.1"/><path d="M587.2 186.9L582.4 187.7L586.3 191.6Z" fill="#3d7fd6"/><text x="639.3" y="188" font-family="Liberation Sans" font-size="10.5" fill="#555">ab</text><text x="639.3" y="195.8" font-family="Liberation Sans" font-size="10.5" fill="#555">c</text><path d="M650.8 190V194.2H647.5" fill="none" stroke="#3d7fd6" stroke-width="1.2"/><path d="M645.8 194.2L648.3 192.2V196.2Z" fill="#3d7fd6"/><path d="M638.6 220.6H652.2V235.3H638.6ZM638.6 225.3H652.2M638.6 230.8H652.2M645.4 220.6V225.3M645.4 230.8V235.3" fill="none" stroke="#444" stroke-width="1.1"/><path d="M641.5 228H649.3" stroke="#3d7fd6" stroke-width="1.2"/><path d="M640.5 228L643 226.2V229.8ZM650.3 228L647.8 226.2V229.8Z" fill="#3d7fd6"/><ellipse cx="795.2" cy="228.5" rx="2.5" ry="3" stroke="#444" stroke-width="1.1" fill="none"/><ellipse cx="802.8" cy="235.3" rx="2.5" ry="3" stroke="#444" stroke-width="1.1" fill="none"/><path d="M803.2 225.2L794.4 238.7" stroke="#444" stroke-width="1.1"/><circle cx="822.9" cy="229.2" r="2.9" fill="#444"/><path d="M824.2 227.5C826.5 228.5 826.8 231 826 233C825 235.5 823 237 820.3 238L819.8 237.2C822 236 823.4 234.2 823.8 232Z" fill="#444"/><rect x="853.2" y="229.2" width="1.6" height="1.6" fill="#555"/><ellipse cx="858" cy="228.1" rx="1.55" ry="2.55" stroke="#333" stroke-width="1" fill="none"/><rect x="846.2" y="237.1" width="1.6" height="1.6" fill="#555"/><ellipse cx="851.8" cy="236.1" rx="1.55" ry="2.55" stroke="#333" stroke-width="1" fill="none"/><ellipse cx="858" cy="236.1" rx="1.55" ry="2.55" stroke="#333" stroke-width="1" fill="none"/><path d="M847.5 227.4H852.9" stroke="#3d7fd6" stroke-width="1.1"/><path d="M846 227.4L848.8 225.3V229.5Z" fill="#3d7fd6"/><rect x="870.2" y="229.2" width="1.6" height="1.6" fill="#555"/><ellipse cx="876" cy="228.1" rx="1.55" ry="2.55" stroke="#333" stroke-width="1" fill="none"/><ellipse cx="882" cy="228.1" rx="1.55" ry="2.55" stroke="#333" stroke-width="1" fill="none"/><rect x="877.2" y="237.1" width="1.6" height="1.6" fill="#555"/><ellipse cx="882" cy="236.1" rx="1.55" ry="2.55" stroke="#333" stroke-width="1" fill="none"/><path d="M870 235.5H875.3" stroke="#3d7fd6" stroke-width="1.1"/><path d="M876.8 235.5L874 233.4V237.6Z" fill="#3d7fd6"/><rect x="928.2" y="177.7" width="20.7" height="18" fill="#8cc1f5"/><path d="M921.5 173.5H948.5V195.5H921.5Z" fill="none" stroke="#666" stroke-width="1"/><path d="M928.5 173.5V195.5M935.5 173.5V195.5M942.5 173.5V195.5M921.5 177.5H948.5M921.5 182.5H948.5M921.5 186.5H948.5M921.5 191.5H948.5" fill="none" stroke="#777" stroke-width="1"/><path d="M928.5 177.5V195.5M935.5 177.5V195.5M942.5 177.5V195.5M928.5 182.5H948.5M928.5 186.5H948.5M928.5 191.5H948.5" fill="none" stroke="#4a8ee0" stroke-width="1"/><path d="M949.2 179.6L951.6 181.8L939 195.2L935.8 192.4Z" fill="#a0a0a0" stroke="#5a5a5a" stroke-width=".9"/><path d="M935.6 192.2L939.3 195.5C938 199.5 933 202.5 926.2 202.5C928.2 200.8 929 197.5 930.2 195.8C931.5 193.8 933.5 192.6 935.6 192.2Z" fill="#3d7fd6"/><path d="M935.6 192.6L938.9 195.4" stroke="#fff" stroke-width="1.4"/><path d="M981.5 175.4H1001.2" stroke="#f26b3a" stroke-width="1"/><path d="M980.5 173.8V177M1002 173.8V177" stroke="#f26b3a" stroke-width="1"/><path d="M981.3 175.4L984.2 174V176.8Z" fill="#f26b3a"/><path d="M1001.2 175.4L998.3 174V176.8Z" fill="#f26b3a"/><rect x="988" y="183.5" width="6.5" height="9.5" fill="#8cc1f5"/><path d="M987.7 178.5V198.5M994.5 178.5V198.5M1001.2 178.5V198.5M980.5 183.5H1007.5M980.5 193.5H1007.5" stroke="#c4c4c4" stroke-width="1"/><path d="M980.5 178.5H1007.5V198.5H980.5Z" fill="none" stroke="#666" stroke-width="1"/><path d="M980.5 198.5V199.5A1.5 1.5 0 0 0 982 201H985.5A2 2 0 0 0 987.5 199M987.5 199A2 2 0 0 0 989.5 201H991A2 2 0 0 0 993 199V198.5" fill="none" stroke="#666" stroke-width="1"/><path d="M1151 325.7H1157.4L1154.2 322Z" fill="#666"/></svg></div></body></html>
